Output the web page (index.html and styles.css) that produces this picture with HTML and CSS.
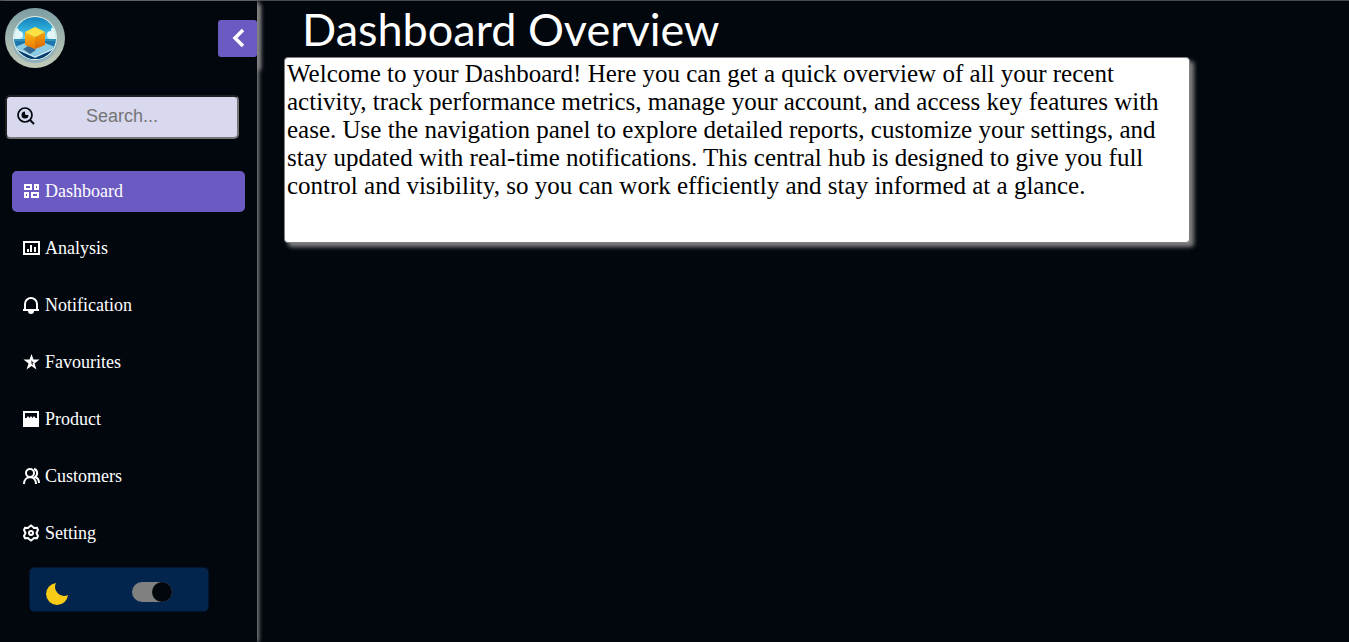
FILE: index.html
```html
<!DOCTYPE html>
<html lang="en">
<head>
<meta charset="utf-8">
<meta name="viewport" content="width=device-width, initial-scale=1">
<title>Dashboard</title>
<link rel="stylesheet" href="styles.css">
</head>
<body>
<div class="layout">
  <aside class="sidebar">
    <header class="brand">
      <svg class="logo" viewBox="0 0 60 60" role="img" aria-label="Logo">
        <defs>
          <linearGradient id="ring" x1="0" y1="0" x2="0" y2="1"><stop offset="0" stop-color="#7d9ea4"/><stop offset="1" stop-color="#c3cbb8"/></linearGradient>
          <linearGradient id="sky" x1="0" y1="0" x2="0" y2="1"><stop offset="0" stop-color="#0e74b4"/><stop offset=".3" stop-color="#2ba9d6"/><stop offset=".6" stop-color="#8be5f5"/></linearGradient>
          <linearGradient id="face" x1="0" y1="0" x2="0" y2="1"><stop offset="0" stop-color="#ffbd14"/><stop offset="1" stop-color="#e87906"/></linearGradient>
          <linearGradient id="side" x1="0" y1="0" x2="0" y2="1"><stop offset="0" stop-color="#f7a60c"/><stop offset="1" stop-color="#d96404"/></linearGradient>
          <clipPath id="disc"><circle cx="30" cy="30" r="21"/></clipPath>
        </defs>
        <circle cx="30" cy="30" r="30" fill="url(#ring)"/>
        <circle cx="30" cy="32" r="23" fill="#8fb0bd"/>
        <circle cx="30" cy="30" r="22" fill="#e6eee0"/>
        <g clip-path="url(#disc)">
          <path d="M8 6h46v48H8z" fill="url(#sky)"/>
          <g fill="#e3f6f7"><circle cx="11" cy="23" r="3"/><circle cx="14" cy="27" r="4"/><circle cx="10" cy="30" r="4"/><circle cx="49" cy="22" r="3"/><circle cx="46" cy="27" r="4"/><circle cx="50" cy="29" r="5"/></g>
          <path d="M8 31h46v23H8z" fill="#1d77ad"/>
          <path d="M8 31h46v2H8z" fill="#3192bd"/>
          <path d="M10 39l20-8 20 8-20 9z" fill="#8ccbe4"/>
          <path d="M10 39l20 9 20-9v2l-20 9-20-9z" fill="#c4e4ef"/>
          <path d="M8 40l22 10 23-10v14H8z" fill="#0a3c70"/>
          <path d="M18 41l7-4 6 5-6 4z" fill="#346a94"/>
        </g>
        <path d="M20 24l10 5v12l-10-4z" fill="url(#face)"/>
        <path d="M30 29l10-5v13l-10 4z" fill="url(#side)"/>
        <path d="M20 24l10-5 10 5-10 5z" fill="#ffe13f"/>
      </svg>
      <button class="collapse" type="button" aria-label="Collapse menu">
        <svg viewBox="0 0 26 26" width="26" height="26"><path d="M18 4l-8 8 8 8" fill="none" stroke="#fff" stroke-width="3.500"/></svg>
      </button>
    </header>

    <form class="search" role="search">
      <input class="search-box" type="text" placeholder="Search..." aria-label="Search">
      <svg class="search-icon" viewBox="0 0 20 20" aria-hidden="true"><circle cx="9" cy="8" r="7" fill="none" stroke="#02060d" stroke-width="1.700"/><path d="M14 13l4 4" stroke="#02060d" stroke-width="2"/><path d="M9 4.500a3.500 3.500 0 1 0 3.500 3.500H10.500a1.500 1.500 0 0 1-1.500-1.500z" fill="#02060d"/></svg>
    </form>

    <nav class="menu" aria-label="Main">
      <a class="item active" href="#dashboard"><svg class="icon" viewBox="0 0 18 18"><path d="M3 3h6v4H3zM13 3h3v4h-3zM3 11h3v4H3zM10 11h6v4h-6z"/></svg>Dashboard</a>
      <a class="item" href="#analysis"><svg class="icon" viewBox="0 0 18 18"><path d="M2 3h15v12H2zM6 13v-3M9 13V6M13 13V8"/></svg>Analysis</a>
      <a class="item" href="#notification"><svg class="icon" viewBox="0 0 18 18"><path d="M3 14V8a6 6 0 0 1 12 0v6M1 14h16"/><path class="solid" d="M6 15h6a3 3 0 0 1-6 0z"/></svg>Notification</a>
      <a class="item" href="#favourites"><svg class="icon" viewBox="0 0 18 18"><path class="solid" fill-rule="evenodd" d="M9.500 1l2 5.500h6l-5 4 2 6-5-3.500-5 3.500 2-6-5-4h6zM9.500 7v4l1.500 1-.5-2L12 9h-1.500z"/></svg>Favourites</a>
      <a class="item" href="#product"><svg class="icon" viewBox="0 0 18 18"><path class="solid" fill-rule="evenodd" d="M1 1h16v16H1zM3 3v5h1.500L6 6l1.500 2L9 6l1.500 2L12 6l1.500 2H15V3z"/></svg>Product</a>
      <a class="item" href="#customers"><svg class="icon" viewBox="0 0 18 18"><circle cx="8" cy="6" r="4"/><path d="M2 17c0-9 12-9 12 0M12 2c4 1 4 6 1 8 3 1 4 3 4 6"/></svg>Customers</a>
      <a class="item" href="#setting"><svg class="icon" viewBox="0 0 18 18"><path d="M7 3l2-1.500L11 3l1 1 3-.2 1 2.200-1.500 3L16 12l-1 2.200-3-.2-1 1-2 1.500L7 15l-1-1-3 .2L2 12l1.500-3L2 6l1-2.200 3 .2z"/><circle cx="9" cy="9" r="2"/></svg>Setting</a>
    </nav>

    <div class="theme">
      <svg class="moon" viewBox="0 0 22 22" aria-hidden="true"><path d="M10 0a11 11 0 1 0 12 12A9 9 0 0 1 10 0z" fill="#f8cb16"/></svg>
      <input class="switch" type="checkbox" role="switch" aria-label="Dark mode" checked>
    </div>
  </aside>

  <main class="content">
    <h1 class="title">Dashboard Overview</h1>
    <p class="intro">Welcome to your Dashboard! Here you can get a quick overview of all your recent activity, track performance metrics, manage your account, and access key features with ease. Use the navigation panel to explore detailed reports, customize your settings, and stay updated with real-time notifications. This central hub is designed to give you full control and visibility, so you can work efficiently and stay informed at a glance.</p>
  </main>
</div>
</body>
</html>
```
FILE: styles.css
```css
* { box-sizing: border-box; }

body {
  margin: 0;
  background: #02070e;
  color: #fff;
  font-family: "Liberation Serif", "Times New Roman", serif;
}

.layout {
  display: flex;
  min-height: 100vh;
  border-top: 1px solid #454a50;
}

.sidebar {
  flex: 0 0 257px;
  box-shadow: 2px 0 4px #808080;
}

.brand {
  display: flex;
  justify-content: space-between;
  align-items: flex-start;
  height: 73px;
  padding: 7px 0 0 5px;
  box-shadow: 8px 0 4px -4px #808080;
}

.logo { width: 60px; height: 60px; }

.collapse {
  display: grid;
  place-items: center;
  width: 39px;
  height: 37px;
  margin-top: 12px;
  padding: 0;
  border: 0;
  border-radius: 3px;
  background: #6c5ac3;
}

.search {
  display: grid;
  align-items: center;
  margin: 21px 18px 0 5px;
}

.search-box {
  grid-area: 1 / 1;
  width: 100%;
  height: 44px;
  padding: 0 0 2px;
  border: 2px inset #767676;
  border-radius: 5px;
  background: #d8d8ee;
  font: 18px "Liberation Sans", Arial, sans-serif;
  text-align: center;
}

.search-box::placeholder { color: #757575; }

.search-icon {
  grid-area: 1 / 1;
  width: 20px;
  height: 20px;
  margin-left: 11px;
  pointer-events: none;
}

.menu {
  display: grid;
  gap: 16px;
  margin: 32px 12px 0;
}

.item {
  display: flex;
  align-items: center;
  gap: 5px;
  height: 41px;
  padding-left: 10px;
  border-radius: 5px;
  color: #fff;
  font-size: 18px;
  text-decoration: none;
}

.item.active { background: #6c5ac3; }

.icon {
  width: 18px;
  height: 18px;
  margin-bottom: 2px;
  fill: none;
  stroke: #fff;
  stroke-width: 2;
}

.icon .solid { fill: #fff; stroke: none; }

.theme {
  display: flex;
  align-items: center;
  justify-content: space-between;
  height: 45px;
  margin: 13px 48px 0 29px;
  padding: 4px 36px 0 16px;
  border: 1px solid #02152e;
  border-radius: 5px;
  background: #02244d;
}

.moon {
  width: 22px;
  height: 22px;
  margin-top: 4px;
}

.switch {
  display: flex;
  justify-content: flex-end;
  width: 40px;
  height: 20px;
  margin: 0;
  border-radius: 10px;
  background: #808080;
  appearance: none;
}

.switch::before {
  content: "";
  width: 20px;
  border-radius: 50%;
  background: #02070e;
}

.switch:not(:checked) { justify-content: flex-start; }

.content { flex: 1; padding: 0 27px; }

.title {
  margin: 0 0 0 18px;
  font: 400 45px/56px "Gill Sans", "Gill Sans MT", Lato, sans-serif;
}

.intro {
  max-width: 906px;
  min-height: 186px;
  margin: 0;
  padding: 2px;
  border: 1px solid #808080;
  border-radius: 4px;
  background: #fff;
  box-shadow: 4px 4px 4px #808080;
  color: #000;
  font-size: 25px;
  line-height: 28px;
}
```
